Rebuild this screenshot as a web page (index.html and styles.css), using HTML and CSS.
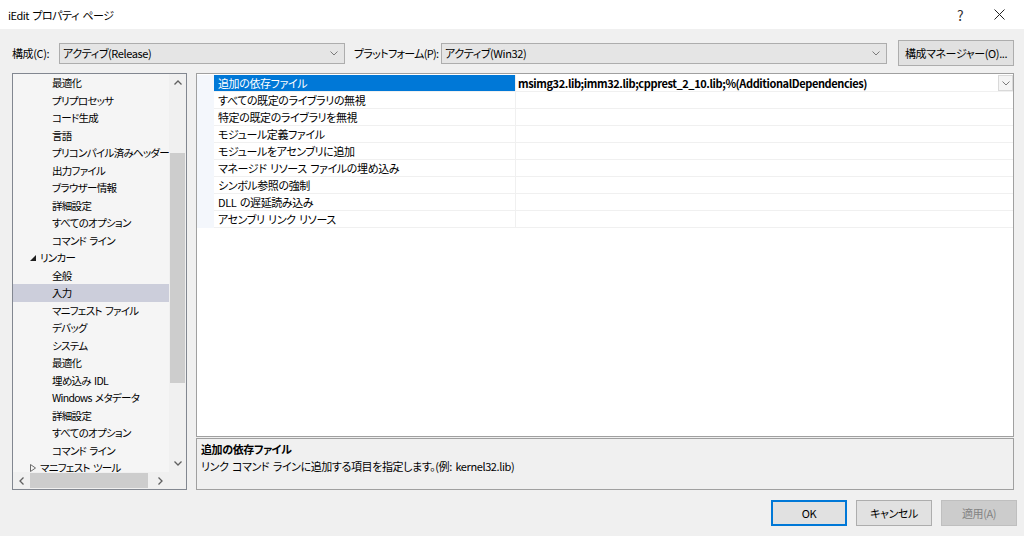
FILE: index.html
```html
<!DOCTYPE html>
<html>
  <head>
    <title>iEdit プロパティ ページ</title>
    <link rel="stylesheet" href="styles.css">
  </head>
  <body>
    <div class="titlebar">
      <span class="title">iEdit プロパティ ページ</span>
      <span class="help">?</span>
      <span class="close">
        <svg width="11" height="11" viewBox="0 0 11 11"><path d="M0.5 0.5 L10.5 10.5 M10.5 0.5 L0.5 10.5" stroke="#222" stroke-width="1" fill="none"/></svg>
      </span>
    </div>

    <div class="dialog">
      <div class="config">
        <label class="lbl-config">構成(C):</label>
        <div class="combo combo-config">
          <span>アクティブ(Release)</span>
          <svg class="chev" width="8" height="5" viewBox="0 0 8 5"><path d="M0.5 0.5 L4 4 L7.5 0.5" stroke="#7a7a7a" fill="none"/></svg>
        </div>
        <label class="lbl-platform">プラットフォーム(P):</label>
        <div class="combo combo-platform">
          <span>アクティブ(Win32)</span>
          <svg class="chev" width="8" height="5" viewBox="0 0 8 5"><path d="M0.5 0.5 L4 4 L7.5 0.5" stroke="#7a7a7a" fill="none"/></svg>
        </div>
        <button class="btn btn-manager">構成マネージャー(O)...</button>
      </div>

      <div class="main">
        <div class="tree">
          <div class="tree-body">
            <ul class="tree-list">
              <li class="child">最適化</li>
              <li class="child">プリプロセッサ</li>
              <li class="child">コード生成</li>
              <li class="child">言語</li>
              <li class="child">プリコンパイル済みヘッダー</li>
              <li class="child">出力ファイル</li>
              <li class="child">ブラウザー情報</li>
              <li class="child">詳細設定</li>
              <li class="child">すべてのオプション</li>
              <li class="child">コマンド ライン</li>
              <li class="node">
                <svg class="tri" width="6" height="6" viewBox="0 0 6 6"><polygon points="6,0 6,6 0,6" fill="#1e1e1e"/></svg>
                <span>リンカー</span>
              </li>
              <li class="child">全般</li>
              <li class="child selected">入力</li>
              <li class="child">マニフェスト ファイル</li>
              <li class="child">デバッグ</li>
              <li class="child">システム</li>
              <li class="child">最適化</li>
              <li class="child">埋め込み IDL</li>
              <li class="child">Windows メタデータ</li>
              <li class="child">詳細設定</li>
              <li class="child">すべてのオプション</li>
              <li class="child">コマンド ライン</li>
              <li class="node">
                <svg class="tri" width="6" height="8" viewBox="0 0 6 8"><polygon points="0.5,0.5 5.5,4 0.5,7.5" fill="none" stroke="#6a6a6a"/></svg>
                <span>マニフェスト ツール</span>
              </li>
            </ul>
            <div class="vscroll">
              <div class="arrow">
                <svg width="8" height="5" viewBox="0 0 8 5"><path d="M0.5 4.5 L4 1 L7.5 4.5" stroke="#606060" stroke-width="1.3" fill="none"/></svg>
              </div>
              <div class="vtrack"><div class="vthumb"></div></div>
              <div class="arrow">
                <svg width="8" height="5" viewBox="0 0 8 5"><path d="M0.5 0.5 L4 4 L7.5 0.5" stroke="#606060" stroke-width="1.3" fill="none"/></svg>
              </div>
            </div>
          </div>
          <div class="hscroll">
            <div class="arrow">
              <svg width="5" height="8" viewBox="0 0 5 8"><path d="M4.5 0.5 L1 4 L4.5 7.5" stroke="#606060" stroke-width="1.3" fill="none"/></svg>
            </div>
            <div class="htrack"><div class="hthumb"></div></div>
            <div class="arrow">
              <svg width="5" height="8" viewBox="0 0 5 8"><path d="M0.5 0.5 L4 4 L0.5 7.5" stroke="#606060" stroke-width="1.3" fill="none"/></svg>
            </div>
            <div class="corner"></div>
          </div>
        </div>

        <div class="right">
          <div class="grid">
            <div class="row selected">
              <div class="gutter"></div>
              <div class="name">追加の依存ファイル</div>
              <div class="value modified">
                <span>msimg32.lib;imm32.lib;cpprest_2_10.lib;%(AdditionalDependencies)</span>
                <span class="drop">
                  <svg width="8" height="5" viewBox="0 0 8 5"><path d="M0.5 0.5 L4 4 L7.5 0.5" stroke="#7a7a7a" fill="none"/></svg>
                </span>
              </div>
            </div>
            <div class="row"><div class="gutter"></div><div class="name">すべての既定のライブラリの無視</div><div class="value"></div></div>
            <div class="row"><div class="gutter"></div><div class="name">特定の既定のライブラリを無視</div><div class="value"></div></div>
            <div class="row"><div class="gutter"></div><div class="name">モジュール定義ファイル</div><div class="value"></div></div>
            <div class="row"><div class="gutter"></div><div class="name">モジュールをアセンブリに追加</div><div class="value"></div></div>
            <div class="row"><div class="gutter"></div><div class="name">マネージド リソース ファイルの埋め込み</div><div class="value"></div></div>
            <div class="row"><div class="gutter"></div><div class="name">シンボル参照の強制</div><div class="value"></div></div>
            <div class="row"><div class="gutter"></div><div class="name">DLL の遅延読み込み</div><div class="value"></div></div>
            <div class="row"><div class="gutter"></div><div class="name">アセンブリ リンク リソース</div><div class="value"></div></div>
          </div>
          <div class="desc">
            <p class="desc-title">追加の依存ファイル</p>
            <p class="desc-text">リンク コマンド ラインに追加する項目を指定します。(例: kernel32.lib)</p>
          </div>
        </div>
      </div>

      <div class="footer">
        <button class="btn btn-ok">OK</button>
        <button class="btn">キャンセル</button>
        <button class="btn" disabled>適用(A)</button>
      </div>
    </div>
  </body>
</html>
```

FILE: styles.css
```css
body {
  margin: 0;
  background-color: #f0f0f0;
  font-family: "Noto Sans CJK JP", sans-serif;
  font-size: 11px;
  font-feature-settings: "palt";
  letter-spacing: -0.4px;
  word-spacing: 1.5px;
  color: #000;
  height: 536px;
  overflow: hidden;
}

/* window caption */
.titlebar {
  height: 29px;
  background-color: #fff;
  display: flex;
  align-items: center;
}

.titlebar .title {
  margin-left: 8px;
  font-size: 11px;
  letter-spacing: -0.5px;
  flex: 1;
}

.titlebar .help {
  font-size: 14px;
  color: #333;
  width: 20px;
  text-align: center;
  margin-right: 24px;
}

.titlebar .close {
  display: flex;
  margin-right: 19px;
}

.dialog {
  padding: 0 10px 0 12px;
}

/* configuration / platform row */
.config {
  margin-top: 11px;
  height: 26px;
  display: flex;
  align-items: center;
}

.config label {
  white-space: nowrap;
  flex-shrink: 0;
}

.lbl-config {
  width: 47px;
}

.lbl-platform {
  width: 87px;
  margin-left: 9px;
  letter-spacing: -0.7px;
}

.combo {
  height: 21px;
  box-sizing: border-box;
  border: 1px solid #adadad;
  background-color: #e5e5e5;
  display: flex;
  align-items: center;
  padding-left: 3px;
}

.combo span {
  flex: 1;
}

.combo .chev {
  margin-right: 6px;
}

.combo-config {
  width: 286px;
}

.combo-platform {
  width: 446px;
}

.btn {
  font-family: inherit;
  font-size: 11px;
  font-feature-settings: "palt";
  letter-spacing: inherit;
  word-spacing: inherit;
  background-color: #e1e1e1;
  border: 1px solid #adadad;
  color: #000;
  height: 26px;
  padding: 0;
}

.btn-manager {
  width: 116px;
  margin-left: 11px;
}

/* tree + grid */
.main {
  margin-top: 7px;
  height: 417px;
  display: flex;
  gap: 9px;
}

.tree {
  width: 175px;
  box-sizing: border-box;
  border: 1px solid #828790;
  background-color: #f5f5f5;
  display: flex;
  flex-direction: column;
  font-size: 10.5px;
  letter-spacing: -0.7px;
}

.tree-body {
  flex: 1;
  display: flex;
  overflow: hidden;
}

.tree-list {
  list-style: none;
  margin: 0;
  padding: 0;
  flex: 1;
  overflow: hidden;
}

.tree-list li {
  height: 17.5px;
  line-height: 17.5px;
  white-space: nowrap;
  display: flex;
  align-items: center;
}

.tree-list li.child {
  padding-left: 39px;
}

.tree-list li.node {
  padding-left: 17px;
}

.tree-list li.node .tri {
  margin-right: 4px;
}

.tree-list li.selected {
  background-color: #cccedb;
}

.vscroll {
  width: 17px;
  background-color: #f0f0f0;
  display: flex;
  flex-direction: column;
}

.arrow {
  width: 17px;
  height: 17px;
  display: flex;
  align-items: center;
  justify-content: center;
  flex-shrink: 0;
}

.vtrack {
  flex: 1;
}

.vthumb {
  margin: 62px 1px 0 1px;
  height: 230px;
  background-color: #cdcdcd;
}

.hscroll {
  height: 17px;
  display: flex;
  background-color: #f0f0f0;
}

.htrack {
  flex: 1;
  display: flex;
  align-items: center;
}

.hthumb {
  width: 118px;
  height: 15px;
  background-color: #cdcdcd;
}

.corner {
  width: 17px;
}

.right {
  flex: 1;
  display: flex;
  flex-direction: column;
  gap: 1px;
}

.grid {
  height: 364px;
  box-sizing: border-box;
  border: 1px solid #a0a0a0;
  background-color: #fff;
  padding-top: 1px;
}

.row {
  height: 17px;
  display: flex;
}

.row .gutter {
  width: 17px;
  background-color: #f4f7fc;
}

.row .name {
  width: 297px;
  padding-left: 4px;
  line-height: 16px;
  border-bottom: 1px solid #f0f0f0;
  white-space: nowrap;
}

.row .value {
  flex: 1;
  border-left: 1px solid #f0f0f0;
  border-bottom: 1px solid #f0f0f0;
  padding-left: 2px;
  line-height: 16px;
  display: flex;
  white-space: nowrap;
}

.row .value span:first-child {
  flex: 1;
}

.row .value.modified {
  font-weight: bold;
}

.row.selected .name {
  background-color: #0078d7;
  color: #fff;
}

.drop {
  width: 15px;
  height: 16px;
  box-sizing: border-box;
  border: 1px solid #d9d9d9;
  background-color: #f4f4f4;
  display: flex;
  align-items: center;
  justify-content: center;
}

.desc {
  flex: 1;
  box-sizing: border-box;
  border: 1px solid #a0a0a0;
  background-color: #f0f0f0;
  padding: 2px 4px;
}

.desc p {
  margin: 0;
  line-height: 17px;
}

.desc-title {
  font-weight: bold;
}

/* dialog buttons */
.footer {
  margin-top: 10px;
  margin-right: -3px;
  display: flex;
  justify-content: flex-end;
  gap: 9px;
}

.footer .btn {
  width: 76px;
}

.btn-ok {
  border: 2px solid #0078d7;
}

.btn[disabled] {
  background-color: #cccccc;
  border-color: #bfbfbf;
  color: #838383;
}
```
